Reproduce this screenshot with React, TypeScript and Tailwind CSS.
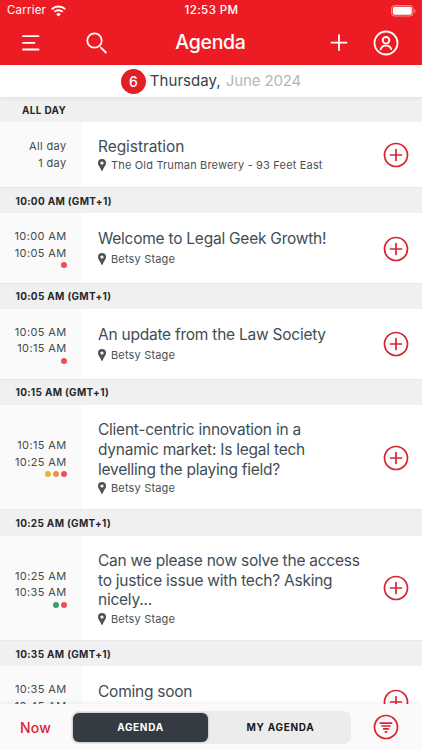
import { clsx } from 'clsx';

type Session = {
  heading: string;
  start: string;
  end: string;
  title: string[];
  place?: string;
  dots?: string[];
  compact?: boolean;
};

const SESSIONS: Session[] = [
  {
    heading: 'ALL DAY',
    start: 'All day',
    end: '1 day',
    title: ['Registration'],
    place: 'The Old Truman Brewery - 93 Feet East',
    compact: true,
  },
  {
    heading: '10:00 AM (GMT+1)',
    start: '10:00 AM',
    end: '10:05 AM',
    title: ['Welcome to Legal Geek Growth!'],
    place: 'Betsy Stage',
    dots: ['bg-[#e8535b]'],
  },
  {
    heading: '10:05 AM (GMT+1)',
    start: '10:05 AM',
    end: '10:15 AM',
    title: ['An update from the Law Society'],
    place: 'Betsy Stage',
    dots: ['bg-[#e8535b]'],
  },
  {
    heading: '10:15 AM (GMT+1)',
    start: '10:15 AM',
    end: '10:25 AM',
    title: ['Client-centric innovation in a', 'dynamic market: Is legal tech', 'levelling the playing field?'],
    place: 'Betsy Stage',
    dots: ['bg-[#e6b43c]', 'bg-[#f0914a]', 'bg-[#e8535b]'],
  },
  {
    heading: '10:25 AM (GMT+1)',
    start: '10:25 AM',
    end: '10:35 AM',
    title: ['Can we please now solve the access', 'to justice issue with tech? Asking', 'nicely...'],
    place: 'Betsy Stage',
    dots: ['bg-[#35a262]', 'bg-[#e8535b]'],
  },
  {
    heading: '10:35 AM (GMT+1)',
    start: '10:35 AM',
    end: '10:45 AM',
    title: ['Coming soon'],
    dots: ['bg-[#e8535b]'],
  },
];

function PinIcon() {
  return (
    <svg width="8" height="12" viewBox="0 0 8 12" className="shrink-0" fill="#4b5357">
      <path
        fillRule="evenodd"
        d="M4 0a4 4 0 0 0-4 4c0 2.500 2.100 3.600 3.200 7.200.2.800 1.400.8 1.600 0C5.900 7.600 8 6.500 8 4a4 4 0 0 0-4-4Zm0 2.400a1.600 1.600 0 1 1 0 3.200 1.600 1.600 0 0 1 0-3.200Z"
      />
    </svg>
  );
}

function AddIcon() {
  return (
    <svg width="26" height="26" viewBox="0 0 26 26" fill="none" stroke="#d8232f" strokeWidth="1.7" strokeLinecap="round">
      <circle cx="13" cy="13" r="11.5" />
      <path d="M13 7.500v11M7.500 13h11" />
    </svg>
  );
}

function StatusBar() {
  return (
    <div className="grid h-[22px] grid-cols-3 items-center pl-[7px] pr-[6px] text-[11.5px] text-white">
      <div className="flex items-center gap-[5px]">
        <span className="tracking-[0.2px]">Carrier</span>
        <svg width="15" height="12" viewBox="0 0 15 12" className="mb-px" fill="none" stroke="#fff">
          <path d="M.8 4.200a9.600 9.600 0 0 1 13.400 0" strokeWidth="2" />
          <path d="M3.300 6.900a6 6 0 0 1 8.400 0" strokeWidth="1.900" />
          <path d="M7.500 11.500 5.300 9.200a3.100 3.100 0 0 1 4.400 0Z" fill="#fff" stroke="none" />
        </svg>
      </div>
      <span className="whitespace-nowrap text-center font-medium tracking-[0.4px]">12:53 PM</span>
      <svg width="25" height="12" viewBox="0 0 25 12" className="mb-px justify-self-end" fill="none">
        <rect x=".5" y=".5" width="21.500" height="10.500" rx="3" stroke="#fff" strokeOpacity=".5" />
        <rect x="1.800" y="1.800" width="19" height="8" rx="1.800" fill="#fff" />
        <path d="M23.300 4v4c1.600-.6 1.600-3.400 0-4Z" fill="#fff" fillOpacity=".5" />
      </svg>
    </div>
  );
}

function NavBar() {
  return (
    <div className="grid h-[42px] grid-cols-[1fr_auto_1fr] items-center pl-[22px] pr-[23px]">
      <div className="flex items-center gap-[46px]">
        <svg width="18" height="16" viewBox="0 0 18 16" stroke="#fff" strokeWidth="1.800" strokeLinecap="round">
          <path d="M1 1.200h15.500M1 7.900h11.500M1 14.500h15.500" />
        </svg>
        <svg width="22" height="22" viewBox="0 0 22 22" fill="none" stroke="#fff" strokeWidth="1.800" strokeLinecap="round">
          <circle cx="8.500" cy="8.500" r="7.200" />
          <path d="m14.900 15.600 5 4.900" />
        </svg>
      </div>
      <h1 className="text-[19.500px] font-medium tracking-[-0.3px] text-white">Agenda</h1>
      <div className="flex items-center justify-end gap-[25px]">
        <svg width="18" height="18" viewBox="0 0 18 18" stroke="#fff" strokeWidth="1.800" strokeLinecap="round">
          <path d="M9 1.200v15M1.500 8.700h15" />
        </svg>
        <svg width="26" height="26" viewBox="0 0 26 26" fill="none" stroke="#fff" strokeWidth="1.800" strokeLinecap="round">
          <circle cx="13" cy="13" r="11.500" />
          <circle cx="13" cy="10.300" r="3.300" />
          <path d="M7.700 19.200c.8-2.600 2.700-3.600 5.300-3.600s4.500 1 5.300 3.600" />
        </svg>
      </div>
    </div>
  );
}

function SessionBlock({ session }: { session: Session }) {
  const { heading, start, end, title, place, dots, compact } = session;
  return (
    <section>
      <h2
        className={clsx(
          'flex items-center bg-[#f0f0f0] text-[10px] font-bold tracking-[0.32px] text-[#25282b]',
          compact ? 'h-[25px] pl-[22px] pt-[1px]' : 'h-[26.3px] border-t border-[#e8e8e8] pl-[15.500px] pt-px',
        )}
      >
        {heading}
      </h2>
      <div className={clsx('flex', compact ? 'h-[65px]' : title.length > 1 ? 'h-[104.400px]' : 'h-[69.500px]')}>
        <div className="flex w-[82px] shrink-0 flex-col items-end justify-center bg-[#fafafa] pr-[15.500px] text-[11px] leading-[16.600px] tracking-[0.36px] text-[#454b4f]">
          <span>{start}</span>
          <span>{end}</span>
          {dots && (
            <div className="mt-[1px] flex gap-[2px]">
              {dots.map((dot, i) => (
                <i key={i} className={clsx('size-[6px] rounded-full', dot)} />
              ))}
            </div>
          )}
        </div>
        <div className={clsx('flex-1 pl-4', compact ? 'pt-[14.500px]' : 'pt-[15.500px]')}>
          <h3
            className={clsx(
              'text-[15.500px] leading-[19.700px] text-[#414d55]',
              compact ? 'tracking-[-0.060px]' : 'tracking-[-0.240px]',
            )}
          >
            {title.map((line) => (
              <span key={line} className="block whitespace-nowrap">
                {line}
              </span>
            ))}
          </h3>
          {place && (
            <p
              className={clsx(
                'flex items-center gap-[5px] whitespace-nowrap text-[11px] leading-[16px] tracking-[0.170px] text-[#4b5054]',
                !compact && title.length === 1 && 'mt-[2.500px]',
                compact && 'mt-[0.500px]',
                title.length > 1 && 'mt-[0.500px]',
              )}
            >
              <PinIcon />
              {place}
            </p>
          )}
        </div>
        <button aria-label="Add" className={clsx('mr-[13px] w-[26px] shrink-0', !compact && 'pt-px')}>
          <AddIcon />
        </button>
      </div>
    </section>
  );
}

function BottomBar() {
  return (
    <div className="flex h-[46px] shrink-0 items-center bg-[#fbf9fa] pl-5 pr-[23px] shadow-[0_-1px_5px_rgba(0,0,0,0.07)]">
      <button className="w-[51px] text-left text-[14px] font-medium tracking-[0.200px] text-[#d8232f]">Now</button>
      <div className="flex h-[33px] w-[280px] items-center rounded-lg bg-[#ececec] px-[2px] text-[10px] font-bold">
        <button className="h-[29px] w-[135px] rounded-md bg-[#343b43] tracking-[0.700px] text-white shadow-[0_0_2px_rgba(0,0,0,0.4)]">
          AGENDA
        </button>
        <button className="flex-1 pl-[4px] tracking-[0.700px] text-[#16181a]">MY AGENDA</button>
      </div>
      <button aria-label="Filter" className="ml-auto">
        <svg width="26" height="26" viewBox="0 0 26 26" fill="none" stroke="#d8232f" strokeWidth="1.700" strokeLinecap="round">
          <circle cx="13" cy="13" r="11.500" />
          <path d="M7.500 9.200h11M9 12h8M10.700 14.900h4.600M12.400 17.900h1.200" />
        </svg>
      </button>
    </div>
  );
}

export default function App() {
  return (
    <div className="flex h-[750px] w-[422px] flex-col overflow-hidden bg-white font-[Inter,sans-serif]">
      <header className="h-[65px] shrink-0 bg-[#ed1c24]">
        <StatusBar />
        <NavBar />
      </header>
      <div className="z-10 flex h-8 shrink-0 items-center justify-center bg-white text-[15px] shadow-[0_1px_5px_rgba(0,0,0,0.07)]">
        <span className="mr-[4px] flex size-[25px] items-center justify-center rounded-full bg-[#e51d27] text-[14px] font-medium text-white">
          6
        </span>
        <span className="tracking-[0.050px] text-[#36424a]">Thursday,</span>
        <span className="ml-[5px] tracking-[-0.120px] text-[#b4b7b9]">June 2024</span>
      </div>
      <main className="min-h-0 flex-1 overflow-hidden">
        {SESSIONS.map((session) => (
          <SessionBlock key={session.heading} session={session} />
        ))}
      </main>
      <BottomBar />
    </div>
  );
}
